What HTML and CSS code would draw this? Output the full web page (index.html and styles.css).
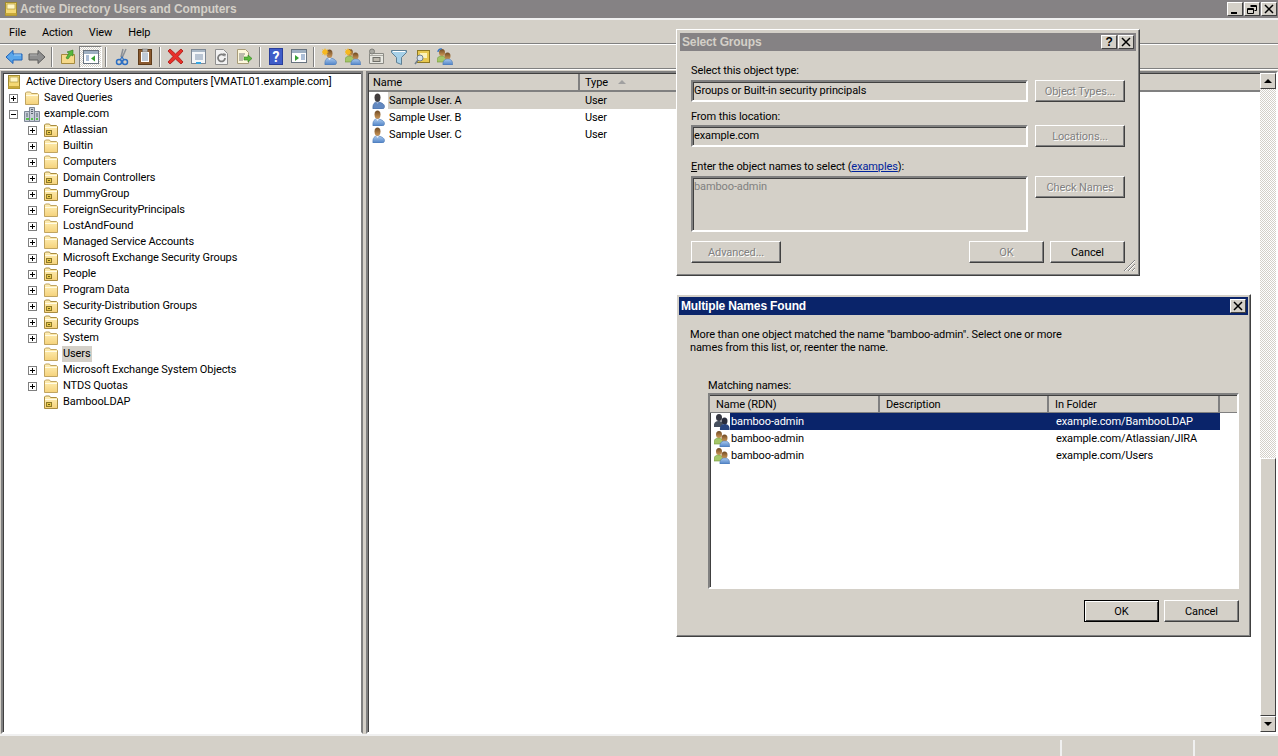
FILE: index.html
```html
<!DOCTYPE html>
<html lang="en">
<head>
    <meta charset="UTF-8">
    <title>Active Directory Users and Computers</title>
    <link rel="stylesheet" href="styles.css">
</head>
<body>
<!-- shared icons -->
<svg class="defs" width="0" height="0">
    <defs>
        <linearGradient id="gFolder" x1="0" y1="0" x2="0" y2="1"><stop offset="0" stop-color="#fff0b8"/><stop offset="1" stop-color="#f5d27a"/></linearGradient>
        <linearGradient id="gBlue" x1="0" y1="0" x2="0" y2="1"><stop offset="0" stop-color="#a9c9ee"/><stop offset="1" stop-color="#4f82c6"/></linearGradient>
        <linearGradient id="gSkin" x1="0" y1="0" x2="0" y2="1"><stop offset="0" stop-color="#6e4a24"/><stop offset="1" stop-color="#d19a58"/></linearGradient>
        <symbol id="folder" viewBox="0 0 16 16"><path d="M1.500 14.500V3l1-1h4l1 1.500h6l1 1v10z" fill="url(#gFolder)" stroke="#c0a460"/><path d="M2 5.500h12" stroke="#fffbe6"/></symbol>
        <symbol id="ou" viewBox="0 0 16 16"><path d="M1.500 14.500V3l1-1h4l1 1.500h6l1 1v10z" fill="url(#gFolder)" stroke="#a88c40"/><path d="M2 5.500h12" stroke="#fffbe6"/><rect x="3.500" y="8.500" width="5" height="4" fill="#e8c84a" stroke="#8f7a28"/><path d="M5 10.500h2" stroke="#6e5c14"/></symbol>
        <symbol id="console" viewBox="0 0 16 16"><rect x="2.500" y="1.500" width="11" height="13" fill="#f4d873" stroke="#a08a30"/><rect x="4" y="3" width="8" height="5" fill="#fff6c4" stroke="#a08a30" stroke-width=".6"/><rect x="2.500" y="12" width="11" height="2.500" fill="#c9a93a"/></symbol>
        <symbol id="domain" viewBox="0 0 16 16"><path d="M.5 5.500h5v10h-5zM5.500 1.500h5v14h-5zM10.500 5.500h5v10h-5z" fill="#c5ccd6" stroke="#7d8795"/><path d="M2 8h2M2 10h2M7 3.500h2M7 5.500h2M7 7.500h2M12 8h2M12 10h2" stroke="#59636f"/><rect x="2" y="12" width="3" height="2" fill="#58c04a"/><rect x="7" y="12" width="2" height="2" fill="#58c04a"/><rect x="12" y="12" width="2" height="2" fill="#58c04a"/></symbol>
        <symbol id="user" viewBox="0 0 16 16"><path d="M2.500 4.500C2.500 1.500 3.800.5 5.500.5s3 1 3 4-1.300 4.500-3 4.500-3-1.500-3-4.500z" fill="url(#gSkin)"/><path d="M1 16c-.5-3 .3-7 4-7 4 0 7.500 2 7.500 4.500 0 1.500-1 2.500-2.500 2.500z" fill="url(#gBlue)" stroke="#4b78b4" stroke-width=".6"/><path d="M4 9l1.500 2L7 9z" fill="#e8eef6"/></symbol>
        <symbol id="userdim" viewBox="0 0 16 16"><path d="M2.500 4.500C2.500 1.500 3.800.5 5.500.5s3 1 3 4-1.300 4.500-3 4.500-3-1.500-3-4.500z" fill="#413c3c"/><path d="M1 16c-.5-3 .3-7 4-7 4 0 7.500 2 7.500 4.500 0 1.500-1 2.500-2.500 2.500z" fill="#6288c0" stroke="#3e649e" stroke-width=".6"/><path d="M4 9l1.500 2L7 9z" fill="#9db3d2"/></symbol>
        <symbol id="group" viewBox="0 0 16 16"><ellipse cx="5" cy="3.500" rx="3" ry="3.500" fill="url(#gSkin)"/><path d="M0 13c-.5-3.500 1-6 4.500-6S9 9 9 13z" fill="#a4c668" stroke="#6e9438" stroke-width=".6"/><ellipse cx="10.500" cy="7" rx="3" ry="3.500" fill="url(#gSkin)"/><path d="M6 16c-.5-3 1-6 4.500-6s5.500 2 5 6z" fill="url(#gBlue)" stroke="#4b78b4" stroke-width=".6"/></symbol>
        <symbol id="groupsel" viewBox="0 0 16 16"><ellipse cx="5" cy="3.500" rx="3" ry="3.500" fill="#343641"/><path d="M0 13c-.5-3.500 1-6 4.500-6S9 9 9 13z" fill="#46505e"/><ellipse cx="10.500" cy="7" rx="3" ry="3.500" fill="#2a2d3d"/><path d="M6 16c-.5-3 1-6 4.500-6s5.500 2 5 6z" fill="#29457f"/></symbol>
        <symbol id="plus" viewBox="0 0 9 9"><rect x=".5" y=".5" width="8" height="8" fill="#fff" stroke="#7f7f7f"/><path d="M2 4.500h5M4.500 2v5" stroke="#000"/></symbol>
        <symbol id="minus" viewBox="0 0 9 9"><rect x=".5" y=".5" width="8" height="8" fill="#fff" stroke="#7f7f7f"/><path d="M2 4.500h5" stroke="#000"/></symbol>
    </defs>
</svg>

<div class="app">
    <div class="titlebar">
        <svg class="ico16"><use href="#console"/></svg>
        <span class="title-text">Active Directory Users and Computers</span>
        <div class="win-btns">
            <span class="cap-btn"><svg width="10" height="10"><path d="M1 8h6v2H1z"/></svg></span>
            <span class="cap-btn"><svg width="10" height="10"><path d="M3.500 1.500h6v5h-2M.5 4.500h6v5h-6zM.5 5.500h6M3.500 2.500h6" fill="none" stroke="#000"/></svg></span>
            <span class="cap-btn"><svg width="10" height="10"><path d="M1 1l8 8M9 1l-8 8" stroke="#000" stroke-width="1.500"/></svg></span>
        </div>
    </div>

    <div class="menubar">
        <span>File</span><span>Action</span><span>View</span><span>Help</span>
    </div>

    <div class="toolbar">
        <span class="tb-btn"><svg width="18" height="16"><path d="M1 8l7-6.500V5h9v6H8v3.500z" fill="#5aa6ea" stroke="#1f62b8"/><path d="M9 6h7" stroke="#a8d4f6"/></svg></span>
        <span class="tb-btn"><svg width="18" height="16"><path d="M17 8l-7-6.500V5H1v6h9v3.500z" fill="#8f8f8f" stroke="#5c5c5c"/><path d="M2 6h7" stroke="#b4b4b4"/></svg></span>
        <span class="tb-sep"></span>
        <span class="tb-btn"><svg width="16" height="16"><path d="M1.500 14.500V5.500h13v9z" fill="#f6d98a" stroke="#a58a3e"/><path d="M6 9l3-5-2-1 6-2v6l-2-1-3 4z" fill="#57b83c" stroke="#2f7f1f" stroke-width=".6"/></svg></span>
        <span class="tb-btn pressed"><svg width="16" height="16"><rect x=".5" y="1.500" width="15" height="13" fill="#fff" stroke="#68737f"/><rect x="1" y="2" width="14" height="3" fill="#9fb0c2"/><path d="M3 7h3M3 9h3M3 11h3" stroke="#5a7fae"/><path d="M12 6.500v6l-4-3z" fill="#37a033"/></svg></span>
        <span class="tb-sep"></span>
        <span class="tb-btn"><svg width="16" height="18"><path d="M9 1L7 9M12 1L8 10" stroke="#8a8f96" stroke-width="1.500"/><circle cx="5" cy="14" r="2.500" fill="none" stroke="#2c6fc4" stroke-width="1.500"/><circle cx="11" cy="14" r="2.500" fill="none" stroke="#2c6fc4" stroke-width="1.500"/><path d="M6 12l2-3 2 3" fill="none" stroke="#2c6fc4" stroke-width="1.200"/></svg></span>
        <span class="tb-btn"><svg width="14" height="17"><rect x=".5" y="1.500" width="13" height="15" fill="#8a5a30" stroke="#5e3c1c"/><rect x="3" y="4" width="8" height="10" fill="#fff"/><path d="M4 6h6M4 8h6M4 10h6M4 12h6" stroke="#7f93ad"/><rect x="4.500" y="1" width="5" height="3" fill="#b0b0b0" stroke="#666" stroke-width=".5"/></svg></span>
        <span class="tb-sep"></span>
        <span class="tb-btn"><svg width="17" height="17"><path d="M1 3l2-2 5.500 5L14 1l2 2-5 5.500 5 5.500-2 2-5.500-5L3 16l-2-2 5-5.500z" fill="#e8302a" stroke="#a81510" stroke-width=".8"/></svg></span>
        <span class="tb-btn"><svg width="15" height="16"><rect x=".5" y=".5" width="14" height="14" fill="#f4f6f8" stroke="#7c8794"/><rect x="1" y="1" width="13" height="2" fill="#aab8c6"/><path d="M4 6h8M4 8h8M4 10h8" stroke="#7f93ad"/><rect x="5" y="13" width="5" height="2" fill="#37a6e0"/></svg></span>
        <span class="tb-btn"><svg width="15" height="16"><path d="M1.500.5h8l4 4v11h-12z" fill="#f2f2f2" stroke="#8f8f8f"/><path d="M11 9a3.500 3.500 0 1 1-1-2.500" fill="none" stroke="#7d7d7d" stroke-width="1.800"/><path d="M9 4l3 1-1 3z" fill="#7d7d7d"/></svg></span>
        <span class="tb-btn"><svg width="17" height="16"><path d="M1.500.5h8l3 3v11h-11z" fill="#fdf8dc" stroke="#a89c78"/><path d="M3 5h6M3 7h5M3 9h4M3 11h4" stroke="#7d7d7d"/><path d="M8 8h4V6l4 3.500-4 3.500v-2H8z" fill="#5cbb3c" stroke="#2f7f1f" stroke-width=".6"/></svg></span>
        <span class="tb-sep"></span>
        <span class="tb-btn"><svg width="14" height="17"><rect width="14" height="17" fill="#2a3f9c"/><rect x="1" y="1" width="12" height="15" fill="#3f5cc8"/><text class="help-mark" x="7" y="14">?</text></svg></span>
        <span class="tb-btn"><svg width="16" height="15"><rect x=".5" y=".5" width="15" height="13" fill="#fff" stroke="#68737f"/><rect x="1" y="1" width="14" height="3" fill="#9fb0c2"/><path d="M4 6v6l4-3z" fill="#37a033"/><path d="M10 6h4M10 8h4M10 10h4" stroke="#5a7fae"/></svg></span>
        <span class="tb-sep"></span>
        <span class="tb-btn"><svg width="16" height="17"><svg x="2" y="1" width="16" height="16"><use href="#user"/></svg><path d="M3 0l1 2 2-1-1 2 2 1-2 1 1 2-2-1-1 2-1-2-2 1 1-2-2-1 2-1-1-2 2 1z" fill="#f6b820"/></svg></span>
        <span class="tb-btn"><svg width="16" height="17"><svg x="0" y="1" width="16" height="16"><use href="#group"/></svg><path d="M3 0l1 2 2-1-1 2 2 1-2 1 1 2-2-1-1 2-1-2-2 1 1-2-2-1 2-1-1-2 2 1z" fill="#f6b820"/></svg></span>
        <span class="tb-btn"><svg width="16" height="17"><path d="M1.500 5.500h14v10h-14z" fill="#e8e8e2" stroke="#8a8a84"/><path d="M2 7.500h13" stroke="#aaa9a2"/><rect x="5" y="9.500" width="7" height="4" fill="#bdb9ae" stroke="#6e6e68"/><circle cx="4" cy="3.500" r="2.500" fill="#a9a9a3" stroke="#7d7d78"/></svg></span>
        <span class="tb-btn"><svg width="16" height="16"><path d="M.5 1.500h15v2l-5 5v7l-5-2v-5l-5-5z" fill="#a6d0e8" stroke="#5e7f94"/><path d="M2 2.500h12" stroke="#fff"/></svg></span>
        <span class="tb-btn"><svg width="16" height="16"><rect x="3.500" y="1.500" width="12" height="12" fill="#e8c84e" stroke="#8e7822"/><rect x="6" y="4" width="7" height="5" fill="#fdf3b8"/><circle cx="6" cy="9" r="3" fill="#d8e4ee" stroke="#72808c"/><path d="M4 11l-3 4" stroke="#72808c" stroke-width="1.500"/></svg></span>
        <span class="tb-btn"><svg width="16" height="17"><svg x="0" y="1" width="16" height="16"><use href="#group"/></svg><path d="M1 4a3 3 0 0 1 4-3" fill="none" stroke="#2c6fc4" stroke-width="1.300"/></svg></span>
    </div>

    <div class="main">
        <div class="tree inset">
            <div class="tree-row l0"><svg class="ico16"><use href="#console"/></svg><span class="label">Active Directory Users and Computers [VMATL01.example.com]</span></div>
            <div class="tree-row l1"><svg class="exp"><use href="#plus"/></svg><svg class="ico16"><use href="#folder"/></svg><span class="label">Saved Queries</span></div>
            <div class="tree-row l1"><svg class="exp"><use href="#minus"/></svg><svg class="ico16"><use href="#domain"/></svg><span class="label">example.com</span></div>
            <div class="tree-row l2"><svg class="exp"><use href="#plus"/></svg><svg class="ico16"><use href="#ou"/></svg><span class="label">Atlassian</span></div>
            <div class="tree-row l2"><svg class="exp"><use href="#plus"/></svg><svg class="ico16"><use href="#folder"/></svg><span class="label">Builtin</span></div>
            <div class="tree-row l2"><svg class="exp"><use href="#plus"/></svg><svg class="ico16"><use href="#folder"/></svg><span class="label">Computers</span></div>
            <div class="tree-row l2"><svg class="exp"><use href="#plus"/></svg><svg class="ico16"><use href="#ou"/></svg><span class="label">Domain Controllers</span></div>
            <div class="tree-row l2"><svg class="exp"><use href="#plus"/></svg><svg class="ico16"><use href="#ou"/></svg><span class="label">DummyGroup</span></div>
            <div class="tree-row l2"><svg class="exp"><use href="#plus"/></svg><svg class="ico16"><use href="#folder"/></svg><span class="label">ForeignSecurityPrincipals</span></div>
            <div class="tree-row l2"><svg class="exp"><use href="#plus"/></svg><svg class="ico16"><use href="#folder"/></svg><span class="label">LostAndFound</span></div>
            <div class="tree-row l2"><svg class="exp"><use href="#plus"/></svg><svg class="ico16"><use href="#folder"/></svg><span class="label">Managed Service Accounts</span></div>
            <div class="tree-row l2"><svg class="exp"><use href="#plus"/></svg><svg class="ico16"><use href="#ou"/></svg><span class="label">Microsoft Exchange Security Groups</span></div>
            <div class="tree-row l2"><svg class="exp"><use href="#plus"/></svg><svg class="ico16"><use href="#ou"/></svg><span class="label">People</span></div>
            <div class="tree-row l2"><svg class="exp"><use href="#plus"/></svg><svg class="ico16"><use href="#folder"/></svg><span class="label">Program Data</span></div>
            <div class="tree-row l2"><svg class="exp"><use href="#plus"/></svg><svg class="ico16"><use href="#ou"/></svg><span class="label">Security-Distribution Groups</span></div>
            <div class="tree-row l2"><svg class="exp"><use href="#plus"/></svg><svg class="ico16"><use href="#ou"/></svg><span class="label">Security Groups</span></div>
            <div class="tree-row l2"><svg class="exp"><use href="#plus"/></svg><svg class="ico16"><use href="#folder"/></svg><span class="label">System</span></div>
            <div class="tree-row l2"><svg class="exp none"></svg><svg class="ico16"><use href="#folder"/></svg><span class="label current">Users</span></div>
            <div class="tree-row l2"><svg class="exp"><use href="#plus"/></svg><svg class="ico16"><use href="#folder"/></svg><span class="label">Microsoft Exchange System Objects</span></div>
            <div class="tree-row l2"><svg class="exp"><use href="#plus"/></svg><svg class="ico16"><use href="#folder"/></svg><span class="label">NTDS Quotas</span></div>
            <div class="tree-row l2"><svg class="exp none"></svg><svg class="ico16"><use href="#ou"/></svg><span class="label">BambooLDAP</span></div>
        </div>

        <div class="details inset">
            <div class="details-body">
                <div class="list-head">
                    <span class="col-name">Name</span>
                    <span class="col-type">Type <i class="sort-arrow"></i></span>
                    <span class="col-rest"></span>
                </div>
                <div class="list-row">
                    <svg class="ico16"><use href="#userdim"/></svg>
                    <div class="row-sel"><span class="cell-name">Sample User. A</span><span>User</span></div>
                </div>
                <div class="list-row">
                    <svg class="ico16"><use href="#user"/></svg>
                    <div class="row-plain"><span class="cell-name">Sample User. B</span><span>User</span></div>
                </div>
                <div class="list-row">
                    <svg class="ico16"><use href="#user"/></svg>
                    <div class="row-plain"><span class="cell-name">Sample User. C</span><span>User</span></div>
                </div>
            </div>
            <div class="scrollbar">
                <span class="sb-btn"><i class="arrow-up"></i></span>
                <div class="sb-track"></div>
                <div class="sb-thumb"></div>
                <span class="sb-btn"><i class="arrow-down"></i></span>
            </div>
        </div>
    </div>

    <div class="statusbar">
        <span class="st-main"></span>
        <span class="st-cell st-mid"></span>
        <span class="st-cell"></span>
    </div>
</div>

<div class="dialog select-groups">
    <div class="dlg-title inactive">
        <span>Select Groups</span>
        <div class="win-btns">
            <span class="cap-btn help">?</span>
            <span class="cap-btn"><svg width="10" height="10"><path d="M1 1l8 8M9 1l-8 8" stroke="#000" stroke-width="1.500"/></svg></span>
        </div>
    </div>
    <div class="dlg-body">
        <div class="lbl first">Select this object type:</div>
        <div class="field-row">
            <div class="field">Groups or Built-in security principals</div>
            <span class="btn off">Object Types...</span>
        </div>
        <div class="lbl second">From this location:</div>
        <div class="field-row">
            <div class="field">example.com</div>
            <span class="btn off">Locations...</span>
        </div>
        <div class="lbl third"><u>E</u>nter the object names to select (<a class="link">examples</a>):</div>
        <div class="field-row tall">
            <div class="field muted">bamboo-admin</div>
            <span class="btn off">Check Names</span>
        </div>
        <div class="dlg-foot">
            <span class="btn off">Advanced...</span>
            <span class="foot-right">
                <span class="btn off small">OK</span>
                <span class="btn small">Cancel</span>
            </span>
        </div>
    </div>
    <svg class="grip" width="13" height="13"><path d="M12 1L1 12M12 5L5 12M12 9L9 12" stroke="#808080"/><path d="M12 2L2 12M12 6L6 12M12 10L10 12" stroke="#fff"/></svg>
</div>

<div class="dialog multi-names">
    <div class="dlg-title active">
        <span>Multiple Names Found</span>
        <div class="win-btns">
            <span class="cap-btn"><svg width="10" height="10"><path d="M1 1l8 8M9 1l-8 8" stroke="#000" stroke-width="1.500"/></svg></span>
        </div>
    </div>
    <div class="names-body">
        <p class="names-msg">More than one object matched the name "bamboo-admin". Select one or more<br>names from this list, or, reenter the name.</p>
        <div class="names-lbl">Matching names:</div>
        <div class="names-list inset">
            <div class="names-head">
                <span class="nh c1">Name (RDN)</span>
                <span class="nh c2">Description</span>
                <span class="nh c3">In Folder</span>
                <span class="nh c4"></span>
            </div>
            <div class="names-row selected">
                <svg class="ico16"><use href="#groupsel"/></svg>
                <div class="names-cells"><span class="nc-name">bamboo-admin</span><span>example.com/BambooLDAP</span></div>
            </div>
            <div class="names-row">
                <svg class="ico16"><use href="#group"/></svg>
                <div class="names-cells"><span class="nc-name">bamboo-admin</span><span>example.com/Atlassian/JIRA</span></div>
            </div>
            <div class="names-row">
                <svg class="ico16"><use href="#group"/></svg>
                <div class="names-cells"><span class="nc-name">bamboo-admin</span><span>example.com/Users</span></div>
            </div>
        </div>
        <div class="names-foot">
            <span class="btn small default">OK</span>
            <span class="btn small">Cancel</span>
        </div>
    </div>
</div>
</body>
</html>
```
FILE: styles.css
```css
* {
    box-sizing: border-box;
}
body {
    margin: 0;
    width: 1278px;
    height: 756px;
    overflow: hidden;
    font-family: Roboto, "Liberation Sans", Arial, sans-serif;
    font-size: 11px;
    letter-spacing: -0.1px;
    color: #000;
    background: #d4d0c8;
}
.defs {
    position: absolute;
}
.app {
    display: flex;
    flex-direction: column;
    height: 756px;
}
.ico16 {
    width: 16px;
    height: 16px;
    flex: none;
}
.inset {
    border: 2px solid;
    border-color: #808080 #fff #fff #808080;
    box-shadow: inset 1px 1px #404040;
}

/* title bar */
.titlebar {
    display: flex;
    align-items: center;
    height: 18px;
    padding: 0 1px 0 3px;
    background: #858284;
    color: #d4d0c8;
    font-family: "Liberation Sans", Arial, sans-serif;
    font-size: 12px;
    font-weight: bold;
    letter-spacing: -0.1px;
}
.title-text {
    margin-left: 1px;
}
.win-btns {
    display: flex;
    margin-left: auto;
    gap: 1px;
}
.cap-btn {
    display: flex;
    align-items: center;
    justify-content: center;
    width: 16px;
    height: 14px;
    background: #d4d0c8;
    color: #000;
    border: 1px solid;
    border-color: #fff #404040 #404040 #fff;
}
.cap-btn.help {
    font-size: 12px;
    font-weight: bold;
}

/* menu and toolbar */
.menubar {
    display: flex;
    align-items: center;
    gap: 16px;
    height: 26px;
    padding: 1px 0 0 9px;
    border-top: 2px solid #f0f0f0;
    border-bottom: 1px solid #808080;
}
.toolbar {
    display: flex;
    align-items: center;
    height: 25px;
    padding-left: 2px;
    border-top: 1px solid #fff;
    border-bottom: 1px solid #808080;
    box-shadow: 0 1px #fff;
}
.tb-btn {
    display: flex;
    align-items: center;
    justify-content: center;
    width: 23px;
    height: 22px;
}
.tb-btn.pressed {
    border: 1px solid;
    border-color: #808080 #fff #fff #808080;
    background: repeating-conic-gradient(#d4d0c8 0 25%, #fff 0 50%) 0 0 / 2px 2px;
}
.tb-sep {
    width: 8px;
    height: 20px;
    margin: 0;
    background: linear-gradient(#808080, #808080) 3px 0 / 1px 100% no-repeat,
                linear-gradient(#fff, #fff) 4px 0 / 1px 100% no-repeat;
}
.help-mark {
    font-size: 14px;
    font-weight: bold;
    fill: #fff;
    text-anchor: middle;
}

/* panes */
.main {
    flex: 1;
    display: flex;
    gap: 4px;
    min-height: 0;
    padding: 2px 0 0 1px;
}
.tree {
    width: 362px;
    padding-top: 1px;
    background: #fff;
    border-right-color: #808080;
}
.tree-row {
    display: flex;
    align-items: center;
    height: 16px;
}
.tree-row.l0 {
    padding-left: 3px;
}
.tree-row.l0 .label {
    margin-left: 3px;
}
.tree-row.l1 {
    padding-left: 6px;
}
.tree-row.l2 {
    padding-left: 25px;
}
.exp {
    width: 9px;
    height: 9px;
    margin-right: 6px;
    flex: none;
}
.exp.none {
    visibility: hidden;
}
.label {
    margin-left: 3px;
    padding: 0 1px;
    line-height: 16px;
    white-space: nowrap;
}
.label.current {
    background: #d4d0c8;
}
.details {
    flex: 1;
    display: flex;
    background: #fff;
    min-width: 0;
    margin-left: -1px;
}
.details-body {
    flex: 1;
    min-width: 0;
}
.list-head {
    display: flex;
    height: 18px;
    line-height: 17px;
    margin-left: 1px;
    margin-top: 1px;
    background: #d4d0c8;
    border-bottom: 2px solid #808080;
}
.col-name {
    width: 211px;
    padding-left: 4px;
    border-right: 2px solid #808080;
}
.col-type {
    width: 200px;
    padding-left: 5px;
}
.sort-arrow {
    display: inline-block;
    margin-left: 7px;
    vertical-align: 2px;
    border: 4px solid transparent;
    border-top: 0;
    border-bottom: 4px solid #a0a0a0;
}
.col-rest {
    flex: 1;
}
.list-row {
    display: flex;
    align-items: center;
    height: 17px;
    padding-left: 4px;
}
.row-sel, .row-plain {
    display: flex;
    line-height: 17px;
    width: 500px;
    padding-left: 1px;
}
.row-sel {
    background: #d4d0c8;
}
.cell-name {
    width: 196px;
}
.scrollbar {
    position: relative;
    display: flex;
    flex-direction: column;
    width: 16px;
}
.sb-btn {
    display: flex;
    align-items: center;
    justify-content: center;
    height: 16px;
    background: #d4d0c8;
    border: 1px solid;
    border-color: #fff #404040 #404040 #fff;
}
.sb-track {
    height: 369px;
    background: repeating-conic-gradient(#d4d0c8 0 25%, #fff 0 50%) 0 0 / 2px 2px;
}
.sb-thumb {
    flex: 1;
    background: #d4d0c8;
    border: 1px solid;
    border-color: #fff #404040 #404040 #fff;
}
.arrow-up, .arrow-down {
    border: 4px solid transparent;
}
.arrow-up {
    border-top: 0;
    border-bottom: 4px solid #000;
}
.arrow-down {
    border-bottom: 0;
    border-top: 4px solid #000;
}

/* status bar */
.statusbar {
    display: flex;
    height: 22px;
    padding-top: 4px;
    border-top: 2px solid #f0f0f0;
}
.st-main {
    flex: 1;
}
.st-cell {
    width: 85px;
    border-left: 2px solid #f0f0f0;
}
.st-mid {
    width: 133px;
}

/* dialogs sit on top of the console like windows on a desktop */
.dialog {
    position: absolute;
    background: #d4d0c8;
    border: 1px solid;
    border-color: #fff #404040 #404040 #fff;
    box-shadow: inset -1px -1px #808080;
}
.select-groups {
    left: 676px;
    top: 29px;
    width: 464px;
    height: 247px;
    padding: 3px;
}
.multi-names {
    left: 676px;
    top: 294px;
    width: 575px;
    height: 343px;
    padding: 2px;
}
.dlg-title {
    display: flex;
    align-items: center;
    height: 18px;
    padding: 0 2px;
    font-family: "Liberation Sans", Arial, sans-serif;
    font-size: 12px;
    font-weight: bold;
    letter-spacing: -0.15px;
}
.dlg-title.inactive {
    background: #858284;
    color: #d4d0c8;
}
.dlg-title.active {
    background: #0a246a;
    color: #fff;
}
.dlg-body {
    padding: 0 11px;
}
.lbl {
    height: 14px;
    line-height: 16px;
}
.lbl.first {
    margin: 12px 0 3px;
}
.lbl.second {
    margin: 7px 0 2px;
}
.lbl.third {
    margin: 12px 0 3px;
}
.link {
    color: #00249c;
    text-decoration: underline;
}
.field-row {
    display: flex;
    gap: 7px;
    align-items: flex-start;
    height: 22px;
}
.field-row.tall {
    height: 56px;
}
.field {
    width: 337px;
    height: 100%;
    padding: 1px 0 0 1px;
    line-height: 16px;
    border: 2px solid;
    border-color: #808080 #fff #fff #808080;
    box-shadow: inset 1px 1px #404040;
}
.field.muted {
    color: #808080;
}
.btn {
    display: flex;
    align-items: center;
    justify-content: center;
    width: 90px;
    height: 22px;
    background: #d4d0c8;
    border: 1px solid;
    border-color: #fff #404040 #404040 #fff;
    box-shadow: inset -1px -1px #808080;
}
.btn.small {
    width: 75px;
}
.btn.off {
    color: #808080;
    text-shadow: 1px 1px #fff;
}
.btn.default {
    border-color: #000;
    box-shadow: inset 1px 1px #fff, inset -1px -1px #404040;
}
.dlg-foot {
    display: flex;
    justify-content: space-between;
    margin-top: 9px;
}
.foot-right {
    display: flex;
    gap: 6px;
}
.grip {
    position: absolute;
    right: 3px;
    bottom: 3px;
}
.names-body {
    padding: 0 9px 0 11px;
}
.names-msg {
    margin: 13px 0 0;
    line-height: 13px;
}
.names-lbl {
    margin: 24px 0 1px 18px;
    height: 14px;
    line-height: 16px;
}
.names-list {
    height: 196px;
    margin-left: 18px;
    background: #fff;
    padding-top: 1px;
}
.names-head {
    display: flex;
    height: 17px;
    line-height: 18px;
    background: #d4d0c8;
    border-bottom: 1px solid #808080;
}
.nh {
    padding-left: 6px;
    border-right: 2px solid #808080;
}
.nh.c1 {
    width: 170px;
}
.nh.c2 {
    width: 169px;
}
.nh.c3 {
    width: 171px;
}
.nh.c4 {
    flex: 1;
    border: 0;
}
.names-row {
    display: flex;
    align-items: center;
    height: 17px;
    padding-left: 4px;
}
.names-cells {
    display: flex;
    width: 490px;
    height: 17px;
    line-height: 18px;
    padding-left: 1px;
}
.names-row.selected .names-cells {
    background: #0a246a;
    color: #fff;
}
.nc-name {
    width: 325px;
}
.names-foot {
    display: flex;
    justify-content: flex-end;
    gap: 5px;
    margin-top: 11px;
}
```
